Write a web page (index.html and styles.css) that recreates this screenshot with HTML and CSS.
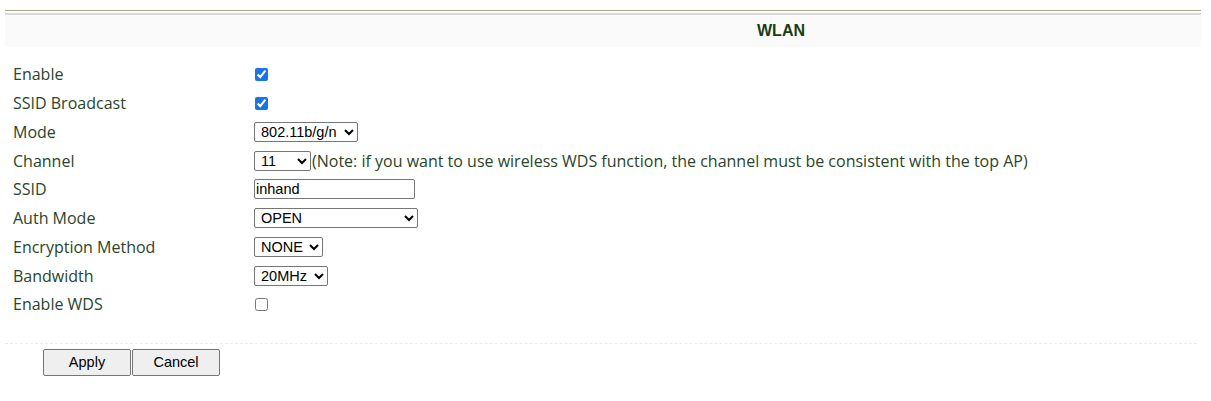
FILE: index.html
```html
<!DOCTYPE html>
<html>
<head>
<meta charset="utf-8">
<link rel="stylesheet" href="styles.css">
</head>
<body>
<div class="page">
  <div class="topline"></div>
  <div class="header">WLAN</div>
  <div class="form">
    <div class="label">Enable</div>
    <div class="ctrl"><input type="checkbox" class="cb" checked></div>
    <div class="label">SSID Broadcast</div>
    <div class="ctrl"><input type="checkbox" class="cb" checked></div>
    <div class="label">Mode</div>
    <div class="ctrl"><select class="sel w-mode"><option>802.11b/g/n</option></select></div>
    <div class="label">Channel</div>
    <div class="ctrl"><select class="sel w-chan"><option>11</option></select><span class="note">(Note: if you want to use wireless WDS function, the channel must be consistent with the top AP)</span></div>
    <div class="label">SSID</div>
    <div class="ctrl"><input type="text" class="txt" value="inhand"></div>
    <div class="label">Auth Mode</div>
    <div class="ctrl"><select class="sel w-auth"><option>OPEN</option></select></div>
    <div class="label">Encryption Method</div>
    <div class="ctrl"><select class="sel w-enc"><option>NONE</option></select></div>
    <div class="label">Bandwidth</div>
    <div class="ctrl"><select class="sel w-bw"><option>20MHz</option></select></div>
    <div class="label">Enable WDS</div>
    <div class="ctrl"><input type="checkbox" class="cb"></div>
  </div>
  <div class="divider"></div>
  <div class="buttons">
    <button class="btn">Apply</button><button class="btn">Cancel</button>
  </div>
</div>
</body>
</html>
```
FILE: styles.css
```css
html, body {
  margin: 0;
  padding: 0;
  background: #ffffff;
}
.page {
  padding: 10px 10px 0 5px;
  font-family: "Open Sans", "Noto Sans", sans-serif;
  color: #1e3b1e;
}
.topline {
  height: 1px;
  background: #a8a888;
  border-bottom: 2px solid #ffffff;
  box-shadow: 0 3px 0 #d8d8d8;
  margin-bottom: 1px;
}
.header {
  margin-top: 2px;
  height: 32px;
  line-height: 32px;
  background: #fafafa;
  text-align: center;
  padding-left: 356px;
  font-family: "Liberation Sans", Arial, sans-serif;
  font-weight: bold;
  font-size: 16px;
  color: #1a3c12;
  box-sizing: border-box;
}
.form {
  display: grid;
  grid-template-columns: 241px 1fr;
  grid-auto-rows: 28.75px;
  margin-top: 13px;
  padding-left: 8px;
  align-items: center;
}
.label {
  font-size: 16px;
  line-height: 20px;
  color: #2a452a;
}
.ctrl {
  display: flex;
  align-items: center;
}
.cb {
  margin: 0 0 0 1px;
  width: 13px;
  height: 13px;
  accent-color: #1a73e8;
}
.sel {
  font-family: "Liberation Sans", Arial, sans-serif;
  font-size: 14.5px;
  height: 20px;
  margin: 0;
  padding: 0 0 0 2px;
  border: 1px solid #767676;
  border-radius: 2px;
  background: #fff;
  color: #000;
}
.w-mode { width: 104px; }
.w-chan { width: 57px; }
.w-auth { width: 164px; }
.w-enc { width: 69px; }
.w-bw { width: 74px; }
.txt {
  font-family: "Liberation Sans", Arial, sans-serif;
  font-size: 14.5px;
  width: 161px;
  height: 20px;
  box-sizing: border-box;
  margin: 0;
  padding: 0 1px;
  border: 1px solid #767676;
  border-radius: 2px;
  color: #000;
}
.note {
  font-size: 16px;
  line-height: 20px;
  color: #2a452a;
  margin-left: 1px;
}
.divider {
  margin-top: 24px;
  border-top: 1px dashed #ebebeb;
  margin-right: 4px;
}
.buttons {
  display: flex;
  padding: 5px 0 0 38px;
}
.btn {
  font-family: "Liberation Sans", Arial, sans-serif;
  font-size: 14.5px;
  width: 88px;
  height: 27px;
  margin: 0 1px 0 0;
  background: #efefef;
  border: 1px solid #767676;
  border-radius: 2px;
  color: #000;
}
```
